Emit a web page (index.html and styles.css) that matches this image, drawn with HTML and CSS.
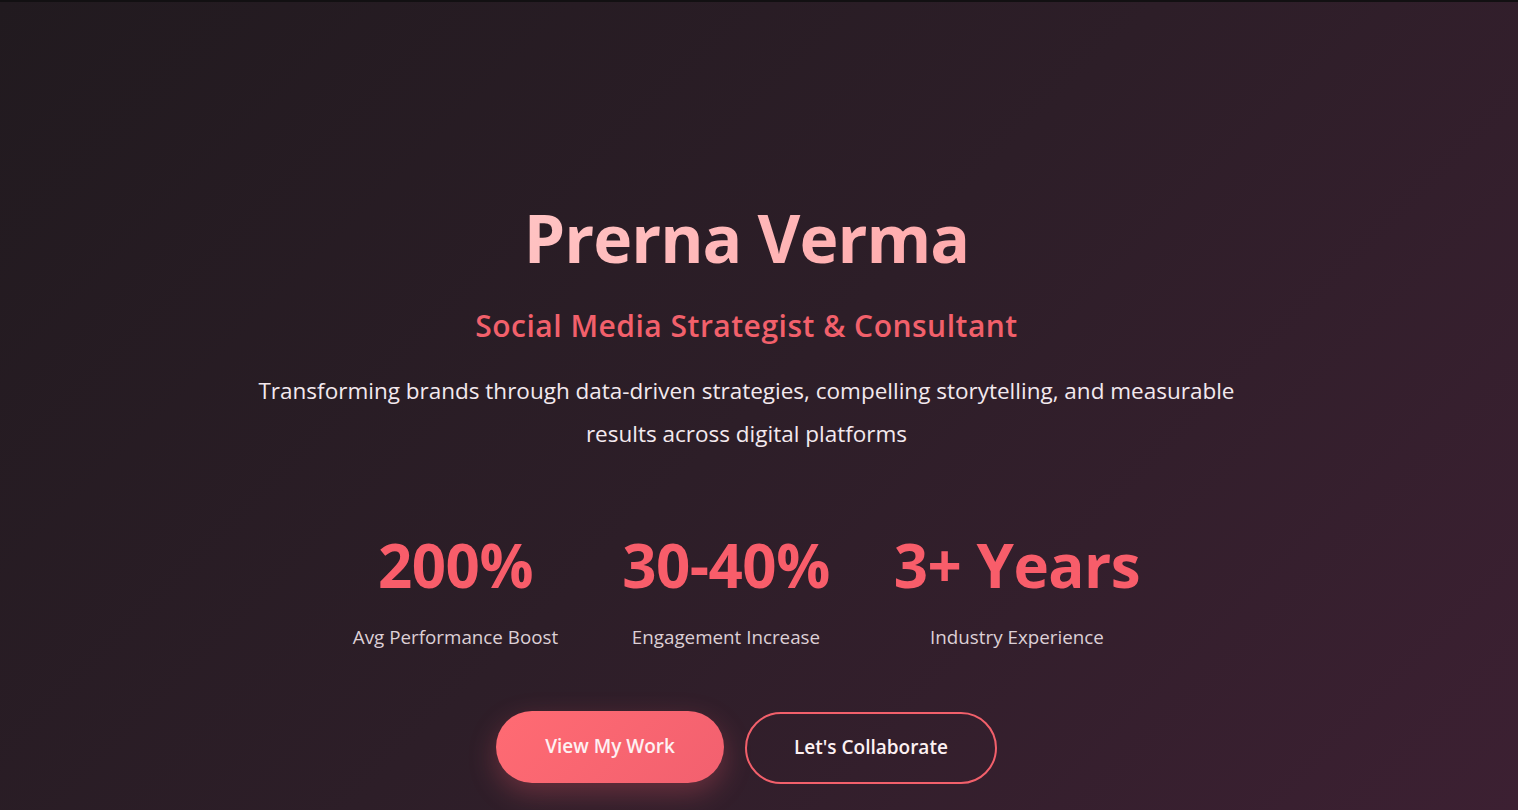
FILE: index.html
```html
<!DOCTYPE html>
<html lang="en">
<head>
<meta charset="utf-8">
<title>Prerna Verma</title>
<link rel="stylesheet" href="styles.css">
</head>
<body>
<section class="hero">
  <div class="hero-content">
    <h1 class="hero-title">Prerna Verma</h1>
    <h2 class="hero-subtitle">Social Media Strategist &amp; Consultant</h2>
    <p class="hero-text">Transforming brands through data-driven strategies, compelling storytelling, and measurable results across digital platforms</p>
    <div class="stats">
      <div class="stat">
        <div class="stat-number">200%</div>
        <div class="stat-label">Avg Performance Boost</div>
      </div>
      <div class="stat">
        <div class="stat-number">30-40%</div>
        <div class="stat-label">Engagement Increase</div>
      </div>
      <div class="stat">
        <div class="stat-number">3+ Years</div>
        <div class="stat-label">Industry Experience</div>
      </div>
    </div>
    <div class="actions">
      <a class="btn btn-primary" href="#work">View My Work</a>
      <a class="btn btn-outline" href="#contact">Let's Collaborate</a>
    </div>
  </div>
</section>
</body>
</html>
```
FILE: styles.css
```css
* { box-sizing: border-box; }
html, body { margin: 0; padding: 0; }
body {
  height: 810px;
  overflow: hidden;
  font-family: "Open Sans", "Noto Sans", sans-serif;
  background: #231a20;
  color: #f3e9ee;
}
.hero {
  height: 810px;
  border-top: 2px solid #121012;
  background: linear-gradient(135deg, #211a1f 0%, #2d1e28 50%, #3c2032 100%);
  padding-right: 25px;
}
.hero-content {
  display: flex;
  flex-direction: column;
  align-items: center;
  text-align: center;
  padding-top: 196px;
}
.hero-title {
  margin: 0;
  font-size: 66px;
  line-height: 1.2;
  font-weight: 700;
  letter-spacing: -1px;
  background: linear-gradient(135deg, #ffc4c4 0%, #ffa9ab 100%);
  -webkit-background-clip: text;
  background-clip: text;
  color: transparent;
}
.hero-subtitle {
  margin: 29px 0 0;
  font-size: 30px;
  line-height: 1.3;
  font-weight: 600;
  letter-spacing: 0.5px;
  color: #f2606b;
}
.hero-text {
  margin: 24px 0 0;
  max-width: 1010px;
  font-size: 22.5px;
  line-height: 1.92;
  color: #f3e9ee;
}
.stats {
  display: flex;
  gap: 64px;
  margin-top: 73px;
}
.stat {
  display: flex;
  flex-direction: column;
  align-items: center;
}
.stat-number {
  font-size: 60px;
  line-height: 1.2;
  font-weight: 700;
  letter-spacing: -0.5px;
  color: #f85d6a;
}
.stat-label {
  margin-top: 22px;
  font-size: 18.8px;
  line-height: 1.5;
  color: #ddd0d6;
}
.actions {
  display: flex;
  gap: 21px;
  margin-top: 61px;
}
.btn {
  display: inline-block;
  padding: 20.5px 47px;
  border-radius: 40px;
  border: 2px solid transparent;
  font-size: 19px;
  line-height: 27px;
  font-weight: 600;
  text-decoration: none;
  color: #fdf1f3;
}
.btn-primary {
  background: linear-gradient(135deg, #ff6b73 0%, #f2606f 100%) border-box;
  box-shadow: 0 10px 28px rgba(255, 95, 110, 0.28);
  transform: translateY(-1px);
}
.btn-outline {
  border-color: #f2606b;
  background: transparent;
}
```
